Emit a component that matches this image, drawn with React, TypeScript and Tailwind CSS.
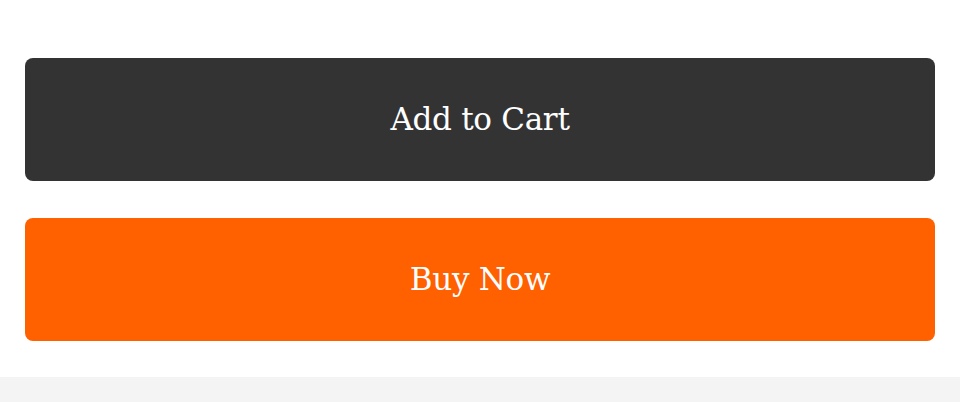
import React from "react";

const buttons = [
  { label: "Add to Cart", className: "bg-[#333333]" },
  { label: "Buy Now", className: "bg-[#ff6000]" },
];

export default function App() {
  return (
    <div className="w-[960px] h-[420px] bg-white flex flex-col" style={{ fontFamily: '"DejaVu Serif", "Liberation Serif", serif' }}>
      <div className="flex flex-col gap-[37px] px-[25px] pt-[58px]">
        {buttons.map((b) => (
          <button
            key={b.label}
            type="button"
            className={`${b.className} h-[123px] w-full rounded-[8px] text-white text-[31px] tracking-[-0.3px] flex items-center justify-center`}
          >
            {b.label}
          </button>
        ))}
      </div>
      <div className="mt-[36px] h-[25px] bg-[#f4f4f4]" />
    </div>
  );
}
